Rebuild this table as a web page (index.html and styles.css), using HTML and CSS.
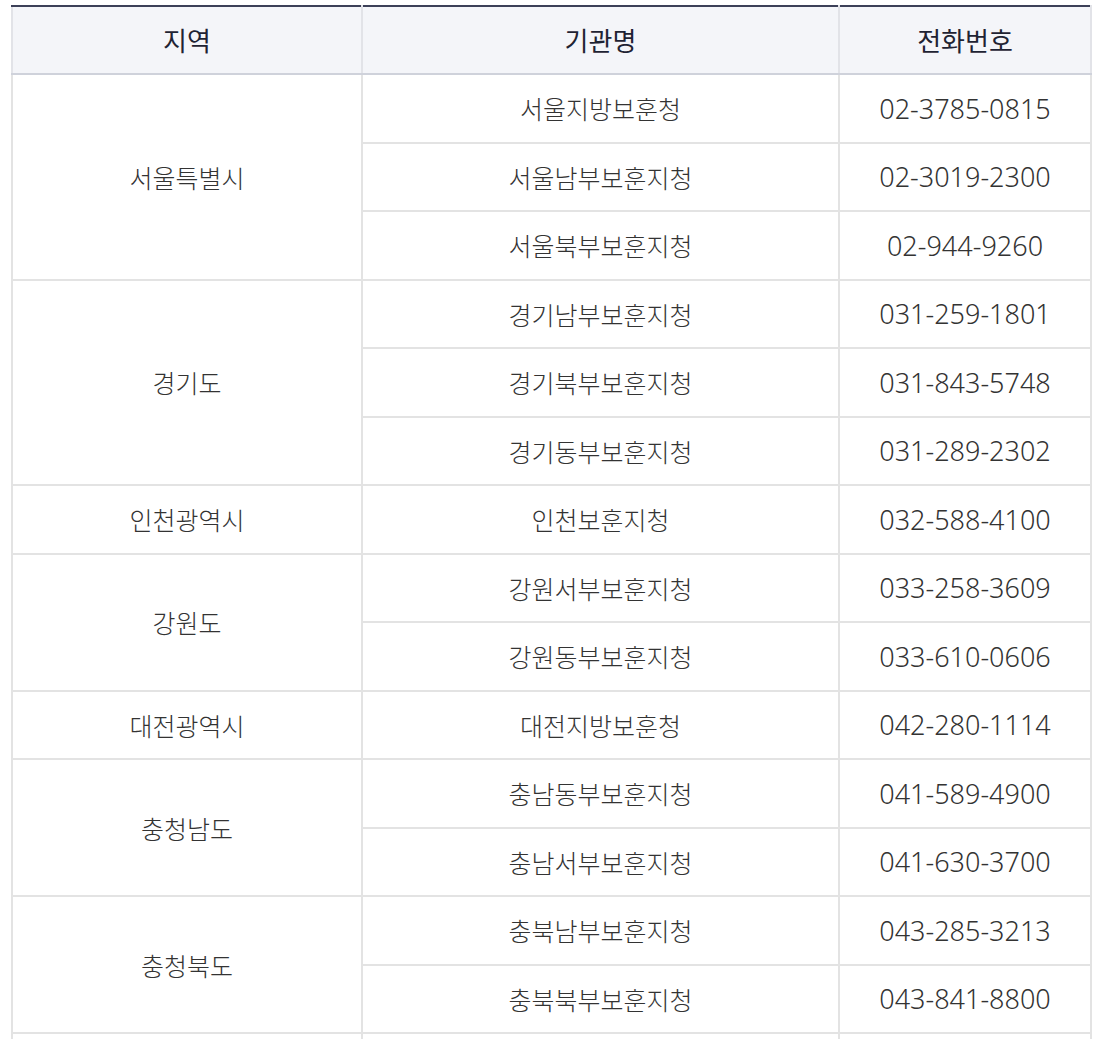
FILE: index.html
```html
<!DOCTYPE html>
<html lang="ko">
<head>
<meta charset="utf-8">
<link rel="stylesheet" href="styles.css">
</head>
<body>
<table class="org-table">
  <thead>
    <tr>
      <th class="col-region">지역</th>
      <th class="col-org">기관명</th>
      <th class="col-tel">전화번호</th>
    </tr>
  </thead>
  <tbody>
    <tr><td rowspan="3">서울특별시</td><td>서울지방보훈청</td><td class="tel">02-3785-0815</td></tr>
    <tr><td>서울남부보훈지청</td><td class="tel">02-3019-2300</td></tr>
    <tr><td>서울북부보훈지청</td><td class="tel">02-944-9260</td></tr>
    <tr><td rowspan="3">경기도</td><td>경기남부보훈지청</td><td class="tel">031-259-1801</td></tr>
    <tr><td>경기북부보훈지청</td><td class="tel">031-843-5748</td></tr>
    <tr><td>경기동부보훈지청</td><td class="tel">031-289-2302</td></tr>
    <tr><td>인천광역시</td><td>인천보훈지청</td><td class="tel">032-588-4100</td></tr>
    <tr><td rowspan="2">강원도</td><td>강원서부보훈지청</td><td class="tel">033-258-3609</td></tr>
    <tr><td>강원동부보훈지청</td><td class="tel">033-610-0606</td></tr>
    <tr><td>대전광역시</td><td>대전지방보훈청</td><td class="tel">042-280-1114</td></tr>
    <tr><td rowspan="2">충청남도</td><td>충남동부보훈지청</td><td class="tel">041-589-4900</td></tr>
    <tr><td>충남서부보훈지청</td><td class="tel">041-630-3700</td></tr>
    <tr><td rowspan="2">충청북도</td><td>충북남부보훈지청</td><td class="tel">043-285-3213</td></tr>
    <tr><td>충북북부보훈지청</td><td class="tel">043-841-8800</td></tr>
    <tr><td>&nbsp;</td><td>&nbsp;</td><td>&nbsp;</td></tr>
  </tbody>
</table>
</body>
</html>
```

FILE: styles.css
```css
html, body {
  margin: 0;
  padding: 0;
  background: #ffffff;
}
body {
  padding: 5px 0 0 11px;
  font-family: "Noto Sans", "Noto Sans CJK KR", sans-serif;
}
.org-table {
  border-collapse: collapse;
  table-layout: fixed;
  border-top: 2px solid #3c4058;
}
.col-region { width: 348px; }
.col-org { width: 475px; }
.col-tel { width: 250px; }
.org-table th,
.org-table td {
  border: 2px solid #e3e3e3;
  text-align: center;
  vertical-align: middle;
  padding: 0;
}
.org-table th {
  height: 66px;
  background: #f4f5f9;
  color: #1f2333;
  font-size: 26px;
  font-weight: 400;
  border-top: 2px solid #3c4058;
  border-bottom: 2px solid #cfd2db;
  border-left-color: #e2e3e8;
  border-right-color: #e2e3e8;
}
.org-table td {
  height: 66.5px;
  color: #333333;
  font-size: 25px;
  font-weight: 300;
}
.org-table td.tel {
  font-size: 27px;
}
```
